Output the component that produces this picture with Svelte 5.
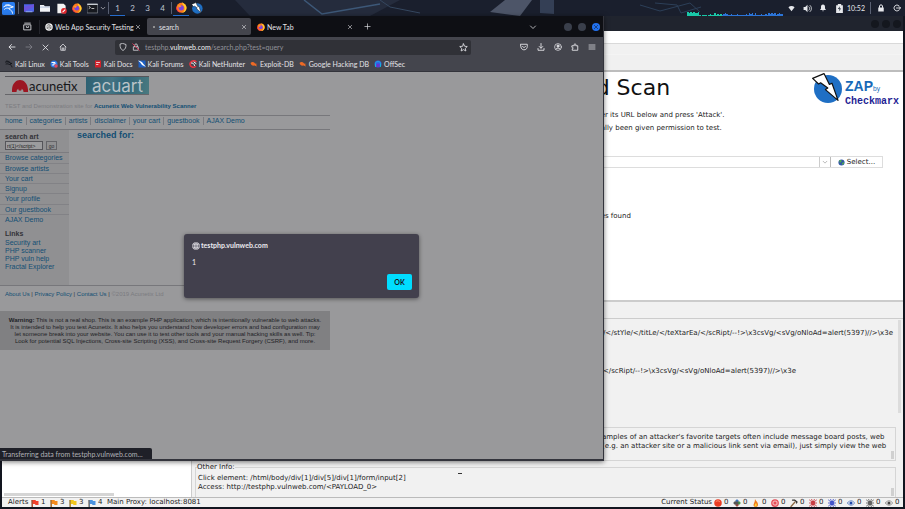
<script>
  const workspaces = [1, 2, 3, 4];
  const bookmarks = [
    { name: 'Kali Linux', icon: 'dragon' },
    { name: 'Kali Tools', icon: 'tools' },
    { name: 'Kali Docs', icon: 'docs' },
    { name: 'Kali Forums', icon: 'forums' },
    { name: 'Kali NetHunter', icon: 'hunter' },
    { name: 'Exploit-DB', icon: 'bug' },
    { name: 'Google Hacking DB', icon: 'bug' },
    { name: 'OffSec', icon: 'offsec' }
  ];
  const siteNav = ['home', 'categories', 'artists', 'disclaimer', 'your cart', 'guestbook', 'AJAX Demo'];
  const sideNav = ['Browse categories', 'Browse artists', 'Your cart', 'Signup', 'Your profile', 'Our guestbook', 'AJAX Demo'];
  const links = ['Security art', 'PHP scanner', 'PHP vuln help', 'Fractal Explorer'];
  const alerts = [
    { color: '#f0402c', count: 1 },
    { color: '#f58a1c', count: 3 },
    { color: '#f2c81e', count: 3 },
    { color: '#4a92e0', count: 4 }
  ];
  const scans = ['ball', 'arrows', 'flame', 'target', 'hammer', 'spider-red', 'spider-blue', 'eye-blue', 'spider-gray', 'eye-gray'];
  const bars = [4, 3, 4, 3, 4, 3, 3, 4, 1, 0, 1, 1, 1, 0, 1, 2, 1, 1, 3, 1, 2, 1, 2, 1, 2, 3, 2, 1, 1, 2, 1, 1, 1, 2, 1, 1, 1, 1, 1, 2, 1, 3, 2, 3, 1, 3, 1, 1, 1, 2, 1, 1, 2, 1, 3, 2, 3, 2, 3, 1, 2, 3, 2, 2];
</script>

{#snippet glyph(name, size = 10)}
  <svg width={size} height={size} viewBox="0 0 16 16" fill="none" stroke="currentColor" stroke-width="1.5" stroke-linecap="round" stroke-linejoin="round" aria-hidden="true">
    {#if name === 'kali'}
      <rect width="16" height="16" rx="2" fill="#2a7df0" stroke="none" />
      <path d="M2 6c3-2 6-2 9-1l3 1-3 1c-2 0-3 1-2 2 2 1 4 2 4 5M3 9c2-2 4-2 6-1M4 4c2-1 4-1 6 0" stroke="#fff" stroke-width="1.1" />
    {:else if name === 'desktop'}
      <rect y="2" width="16" height="12" fill="#4f63e8" stroke="none" />
      <path d="M0 14V6l16-4v4z" fill="#6a53dc" stroke="none" />
      <path d="M3 14h10" stroke="#9db5ff" />
    {:else if name === 'folder'}
      <path d="M0 3h6l2 2h8v9H0z" fill="#f2f4f8" stroke="none" />
      <path d="M0 6h16v1H0z" fill="#8ea4cf" stroke="none" />
    {:else if name === 'editor'}
      <path d="M2 1h9l3 3v11H2z" fill="#f4f4f4" stroke="none" />
      <circle cx="11.5" cy="11.5" r="4.2" fill="#e3272d" stroke="none" />
      <path d="m10 13 3-3" stroke="#fff" />
    {:else if name === 'firefox'}
      <circle cx="8" cy="8.4" r="7.4" fill="#ff7a1a" stroke="none" />
      <path d="M9 0c1 2 5 3 6 7 1 5-3 9-7 9 5-2 5-6 4-9-1-2-3-4-3-7z" fill="#ffcf2f" stroke="none" />
      <path d="M1 6c0 6 4 10 9 9-5 2-10-2-10-7z" fill="#f0265a" stroke="none" />
      <circle cx="7.6" cy="8.4" r="3.8" fill="#7a45e0" stroke="none" />
      <path d="M3 5c2-1 4 0 5 1L5 8z" fill="#ff9a2a" stroke="none" />
    {:else if name === 'terminal'}
      <rect x=".5" y="1.5" width="15" height="13" fill="#171a20" stroke="#8b9098" stroke-width="1" />
      <path d="M1 2h14" stroke="#c7ccd3" />
      <path d="m3 5 2 1.500L3 8M7 8h3" stroke="#fff" stroke-width="1" />
    {:else if name === 'down'}
      <path d="m3 6 5 5 5-5" />
    {:else if name === 'zap'}
      <circle cx="8.500" cy="8.500" r="7" fill="#1f6fc4" stroke="none" />
      <path d="M.8 3.200 6.500.8l2.700 5.400 1.300-.6 3 8.600-6.300-5.400 1.200-.8-3.600-2.600-1 .6z" fill="#fff" stroke="#111" stroke-width=".6" />
    {:else if name === 'wifi'}
      <path d="M1 5c4-4 10-4 14 0l-7 9z" fill="currentColor" stroke="none" />
    {:else if name === 'volume'}
      <path d="M1 5.500h3l4-4v13l-4-4H1z" fill="currentColor" stroke="none" />
      <path d="M10.500 5c2 2 2 4 0 6M12.500 2.500c3.500 3 3.500 8 0 11" />
    {:else if name === 'bell'}
      <path d="M8 1c-3 0-4 2-4 5v3l-2 3h12l-2-3V6c0-3-1-5-4-5zM6 13h4l-2 2z" fill="currentColor" stroke="none" />
    {:else if name === 'battery'}
      <path d="M5 0h6v2h3v14H2V2h3z" fill="currentColor" stroke="none" />
      <path d="M9 4 5 9h3l-1 4 4-5H8z" fill="#1d2433" stroke="none" />
    {:else if name === 'lock'}
      <rect x="2.500" y="7" width="11" height="8" fill="currentColor" stroke="none" />
      <path d="M5 7V4c0-3 6-3 6 0v3" stroke-width="2" />
    {:else if name === 'logout'}
      <path d="M12 3.500A6 6 0 1 0 12 12.500M7 8h8M12.500 5.500 15 8l-2.500 2.500" stroke-width="1.800" />
    {:else if name === 'recent'}
      <path d="M3 2h10M2 5h12v9H2zM6 8v1.500h4V8" />
    {:else if name === 'globe'}
      <circle cx="8" cy="8" r="7.5" fill="#eceaf0" stroke="none" />
      <path d="M1 8h14M8 1v14M4.500 2.500c-2 4-2 7 0 11M11.500 2.500c2 4 2 7 0 11" stroke="#42404d" stroke-width="1.200" />
    {:else if name === 'openai'}
      <circle cx="8" cy="8" r="7.5" fill="#f5f5f5" stroke="none" />
      <path d="M8 3.500 12 5.700v4.600L8 12.500 4 10.300V5.700zM8 3.500v4.500l4 2.300M8 8l-4 2.300" stroke="#333" stroke-width="1" />
    {:else if name === 'close'}
      <path d="m3.500 3.500 9 9M12.500 3.500l-9 9" />
    {:else if name === 'plus'}
      <path d="M8 2v12M2 8h12" />
    {:else if name === 'back'}
      <path d="M14 8H2.500M7 3 2 8l5 5" stroke-width="1.800" />
    {:else if name === 'forward'}
      <path d="M2 8h11.500M9 3l5 5-5 5" />
    {:else if name === 'home'}
      <path d="M2 8 8 2l6 6M3.500 7v7.500h9V7M6.500 14v-4h3v4" />
    {:else if name === 'shield'}
      <path d="m8 1 6 2c0 6-1 9-6 12C3 12 2 9 2 3z" />
    {:else if name === 'insecure'}
      <path d="M3.500 7.500h9v7h-9zM5.500 7V4c0-3 5-3 5 0v3" />
      <path d="M1.500 1.500 14.500 14.500" stroke="#e5395a" stroke-width="1.800" />
    {:else if name === 'star'}
      <path d="m8 1.500 2 4.300 4.700.5-3.500 3.200 1 4.700L8 11.800l-4.200 2.400 1-4.700L1.300 6.300 6 5.800z" />
    {:else if name === 'pocket'}
      <path d="M1.500 2.500h13V7c0 9-13 9-13 0zM5 6.500l3 3 3-3" stroke-width="1.800" />
    {:else if name === 'download'}
      <path d="M8 1v9M4.500 7 8 10.500 11.500 7M2 11v3.500h12V11" stroke-width="1.800" />
    {:else if name === 'account'}
      <circle cx="8" cy="8" r="6.8" />
      <circle cx="8" cy="6" r="2.200" fill="currentColor" />
      <path d="M4 12c1-3 7-3 8 0" stroke-width="2" />
    {:else if name === 'extension'}
      <path d="M2.500 5.500h4V3c0-2 3-2 3 0v2.500h4v9h-11v-3c3 0 3-3 0-3z" stroke-width="1.800" />
    {:else if name === 'menu'}
      <path d="M2 4h12M2 8h12M2 12h12" />
    {:else if name === 'dragon'}
      <path d="M1 4c4-1 7 0 9 2l4 1-4 1c1 2 3 3 4 6M2 8c3-1 5 0 7 1M3 2c3 0 5 1 7 3" stroke="#111318" stroke-width="1.800" />
    {:else if name === 'tools'}
      <circle cx="8" cy="8" r="7" fill="#2f7be8" stroke="none" />
      <path d="M4 5h6v3H6v3" stroke="#fff" stroke-width="2" />
      <circle cx="12" cy="12" r="3.500" fill="#e6495c" stroke="none" />
    {:else if name === 'docs'}
      <rect x="2" y="1" width="12" height="14" fill="#d4202a" stroke="none" />
      <path d="M5 5h6M5 9h3" stroke="#fff" />
    {:else if name === 'forums'}
      <path d="M1 1h14v14H1z" fill="#1c5fc4" stroke="none" />
      <path d="M0 1c6 1 9 3 10 6l6 7-8-4C6 6 3 4 0 1z" fill="#fff" stroke="none" />
    {:else if name === 'hunter'}
      <path d="M14 3C8-1 1 4 2 9s7 7 11 4" stroke="#e8343f" stroke-width="3" />
      <path d="M5 6c3 0 5 1 6 5M10 4l4 3" stroke="#fff" stroke-width="2" />
    {:else if name === 'bug'}
      <path d="M1 6c3-3 7-2 9 1l5 1-3 1 2 4-5-2c-4 1-7-1-8-5z" fill="#ee6a25" stroke="none" />
    {:else if name === 'offsec'}
      <circle cx="8" cy="8" r="7" fill="#3559e8" stroke="none" />
      <path d="M3 13V7c0-5 10-5 10 0v6" stroke="#16b3d9" stroke-width="2" />
      <rect x="5" y="8" width="6" height="6" fill="#6a35c9" stroke="none" />
    {:else if name === 'earth'}
      <circle cx="8" cy="8" r="7" fill="#3256a8" stroke="none" />
      <path d="M3 3c4-2 6 0 5 3l-4 3zM9 9l5-2c0 4-2 6-5 6z" fill="#4fae4a" stroke="none" />
    {:else if name === 'ball'}
      <circle cx="8" cy="8" r="7.500" fill="#ea3b22" stroke="none" />
      <path d="M4 5c2-2 5-2 7 0" stroke="#ff9a7c" stroke-width="2" />
    {:else if name === 'arrows'}
      <path d="M8 2v12M2 8h12" stroke="#555" stroke-width="5" stroke-linecap="butt" />
      <path d="m8 0 4 5H4z" fill="#3a74c2" stroke="none" />
      <path d="m16 8-5 4V4z" fill="#3fa045" stroke="none" />
      <path d="m8 16-4-5h8z" fill="#a04a3d" stroke="none" />
      <path d="m0 8 5-4v8z" fill="#555" stroke="none" />
    {:else if name === 'flame'}
      <path d="M6 0c1 4 6 6 6 11 0 7-9 6-9 1 0-3 3-5 3-12z" fill="#f07a18" stroke="none" />
      <path d="M8 8c3 4 1 7-1 7s-3-3 1-7z" fill="#ffd23a" stroke="none" />
    {:else if name === 'target'}
      <circle cx="8" cy="8" r="6.500" fill="#f7b5b8" stroke="#e5505a" stroke-width="2.500" />
      <circle cx="8" cy="8" r="3" fill="#e5505a" stroke="none" />
    {:else if name === 'hammer'}
      <path d="m2 15 8-9" stroke="#8b6a45" stroke-width="2.500" />
      <path d="m5 2 4 0 5 4-1 2" stroke="#333" stroke-width="2.500" />
    {:else if name.startsWith('spider')}
      <g stroke={name === 'spider-red' ? '#c32f35' : name === 'spider-blue' ? '#3548c8' : '#555'} stroke-width="1.600">
        <path d="M1 2l5 4M15 2l-5 4M0 8h16M1 14l5-4M15 14l-5-4M5 0l2 5M11 0 9 5M5 16l2-5M11 16l-2-5" />
        <circle cx="8" cy="8" r="2.500" stroke-width="3" />
      </g>
    {:else if name.startsWith('eye')}
      <path d="M1 8c3-6 11-6 14 0-3 6-11 6-14 0z" fill="#fff" stroke={name === 'eye-blue' ? '#4a6fb5' : '#777'} />
      <circle cx="8" cy="8" r="3.200" fill={name === 'eye-blue' ? '#1f48a8' : '#444'} stroke="none" />
    {/if}
  </svg>
{/snippet}

<div class="desktop">
  <header class="panel">
    <svg class="wallpaper" viewBox="0 0 905 16" preserveAspectRatio="none" aria-hidden="true">
      <path d="M235 0h165l-30 16h-120z" fill="#252c3d" />
      <path d="m304 0 18 14 58-10" stroke="#3d5878" stroke-width="1.500" fill="none" />
      <path d="m380 0 10 7 30 6" stroke="#35475f" fill="none" />
      <path d="m505 0-15 12 30 4 12-16z" fill="#4d5568" />
      <path d="M540 0v13l14 1V0" fill="#343f55" />
      <path d="m640 5 20 6 30-8 10 9M655 3l22 2 4 8 20-6" stroke="#2c3f58" fill="none" />
    </svg>
    <button class="pb start" aria-label="Applications">{@render glyph('kali', 13)}</button>
    <i class="sep"></i>
    <button class="pb" aria-label="Show desktop">{@render glyph('desktop', 10)}</button>
    <button class="pb" aria-label="Files">{@render glyph('folder', 10)}</button>
    <button class="pb" aria-label="Text editor">{@render glyph('editor', 11)}</button>
    <button class="pb" aria-label="Firefox">{@render glyph('firefox', 10)}</button>
    <button class="pb tight" aria-label="Terminal">{@render glyph('terminal', 11)}</button>
    <button class="pb tiny" aria-label="More terminals">{@render glyph('down', 6)}</button>
    <i class="sep"></i>
    {#each workspaces as n}
      <button class="ws" class:active={n === 1}>{n}</button>
    {/each}
    <i class="sep"></i>
    <button class="pb active" aria-label="Firefox window">{@render glyph('firefox', 11)}</button>
    <button class="pb" aria-label="ZAP window">{@render glyph('zap', 12)}</button>
    <span class="grow"></span>
    <div class="graph" aria-hidden="true">
      {#each bars as h, i}
        <i class:cool={i > 22} style="height:{h}px"></i>
      {/each}
    </div>
    <div class="tray">
      <button class="pb" aria-label="Network">{@render glyph('wifi', 7)}</button>
      <button class="pb" aria-label="Volume">{@render glyph('volume', 9)}</button>
      <button class="pb" aria-label="Notifications">{@render glyph('bell', 8)}</button>
      <button class="pb" aria-label="Power">{@render glyph('battery', 9)}</button>
      <time>10:52</time>
      <i class="sep"></i>
      <button class="pb" aria-label="Lock">{@render glyph('lock', 8)}</button>
      <button class="pb" aria-label="Log out">{@render glyph('logout', 8)}</button>
    </div>
  </header>

  <section class="zap">
    <div class="ztitle"><i></i><i></i><i></i></div>
    <div class="zmenu"></div>
    <div class="ztools"></div>
    <div class="quick">
      <div class="qhead">
        <h1>d Scan</h1>
        <div class="zlogo">
          {@render glyph('zap', 32)}
          <div class="zname">
            <div class="ztop"><b>ZAP</b><small>by</small></div>
            <strong>Checkmarx</strong>
          </div>
        </div>
      </div>
      <p>er its URL below and press 'Attack'.</p>
      <p>ally been given permission to test.</p>
      <div class="attack">
        <input type="text" aria-label="URL to attack" />
        <button class="drop" aria-label="History">{@render glyph('down', 6)}</button>
        <button class="select">{@render glyph('earth', 7)}Select...</button>
      </div>
      <p class="found">es found</p>
    </div>
    <div class="zstrip"></div>
    <div class="zbottom">
      <div class="tree"><i></i></div>
      <div class="detail">
        <div class="request">
          <p>/&lt;/stYle/&lt;/titLe/&lt;/teXtarEa/&lt;/scRipt/--!&gt;\x3csVg/&lt;sVg/oNloAd=alert(5397)//&gt;\x3e</p>
          <p>&lt;/scRipt/--!&gt;\x3csVg/&lt;sVg/oNloAd=alert(5397)//&gt;\x3e</p>
          <i class="bar"></i>
        </div>
        <div class="box desc">
          <p>amples of an attacker's favorite targets often include message board posts, web</p>
          <p>(e.g. an attacker site or a malicious link sent via email), just simply view the web</p>
          <i class="thumb"></i>
        </div>
        <div class="box info">
          <h2>Other Info:</h2>
          <p>Click element: /html/body/div[1]/div[5]/div[1]/form/input[2]</p>
          <p>Access: http://testphp.vulnweb.com/&lt;PAYLOAD_0&gt;</p>
          <i class="caret"></i>
          <i class="thumb"></i>
        </div>
      </div>
    </div>
    <footer class="zstatus">
      <span class="al">Alerts</span>
      {#each alerts as a}
        <span class="flag">
          <svg width="8" height="8" viewBox="0 0 16 16" aria-hidden="true"><path d="M1 2h8l1 2h5v8H9l-1-2H4v6H2z" fill={a.color} /><path d="M2 2v14" stroke="#7a5a3a" stroke-width="2" /></svg>{a.count}
        </span>
      {/each}
      <span>Main Proxy: localhost:8081</span>
      <span class="grow"></span>
      <span class="cs">Current Status</span>
      {#each scans as s}
        <span class="scan">{@render glyph(s, 8)}0</span>
      {/each}
    </footer>
  </section>

  <section class="browser">
    <div class="tabs">
      <button class="recent" aria-label="Recent browsing">{@render glyph('recent', 9)}</button>
      <div class="tab">{@render glyph('openai', 8)}<span>Web App Security Testing</span><button aria-label="Close tab">{@render glyph('close', 6)}</button></div>
      <div class="tab current"><i class="dot"></i><span>search</span><button aria-label="Close tab">{@render glyph('close', 6)}</button></div>
      <div class="tab">{@render glyph('firefox', 8)}<span>New Tab</span><button aria-label="Close tab">{@render glyph('close', 6)}</button></div>
      <button class="new" aria-label="New tab">{@render glyph('plus', 7)}</button>
      <span class="grow"></span>
      <button class="list" aria-label="List tabs">{@render glyph('down', 8)}</button>
      <button class="win" aria-label="Minimize"></button>
      <button class="win" aria-label="Maximize"></button>
      <button class="win shut" aria-label="Close">{@render glyph('close', 6)}</button>
    </div>
    <div class="toolbar">
      <button aria-label="Back">{@render glyph('back', 8)}</button>
      <button class="faint" aria-label="Forward">{@render glyph('forward', 8)}</button>
      <button aria-label="Stop">{@render glyph('close', 9)}</button>
      <button aria-label="Home">{@render glyph('home', 8)}</button>
      <div class="url">
        {@render glyph('shield', 8)}
        {@render glyph('insecure', 8)}
        <span class="addr">testphp.<b>vulnweb.com</b>/search.php?test=query</span>
        {@render glyph('star', 9)}
      </div>
      <button aria-label="Pocket">{@render glyph('pocket', 8)}</button>
      <button aria-label="Downloads">{@render glyph('download', 8)}</button>
      <button aria-label="Account">{@render glyph('account', 8)}</button>
      <button aria-label="Extensions">{@render glyph('extension', 8)}</button>
      <button aria-label="Menu">{@render glyph('menu', 8)}</button>
    </div>
    <nav class="marks">
      {#each bookmarks as b}
        <a href="#{b.icon}">{@render glyph(b.icon, 8)}{b.name}</a>
      {/each}
    </nav>
    <main class="page">
      <div class="site">
        <div class="brand">
          <div class="acunetix">
            <svg width="16" height="12" viewBox="0 0 16 12" aria-hidden="true"><path d="M0 12C-1-4 17-4 16 12h-4.500a3.500 3.500 0 1 0-7 0z" fill="#9c1622" /><circle cx="8" cy="9" r="1.800" fill="#9c1622" /></svg>
            <span>acunetix</span>
          </div>
          <div class="acuart">acuart</div>
        </div>
        <h6>TEST and Demonstration site for <a href="#scanner">Acunetix Web Vulnerability Scanner</a></h6>
        <nav class="sitenav">
          {#each siteNav as item}<a href="#{item}">{item}</a>{/each}
        </nav>
        <div class="cols">
          <aside>
            <label for="art">search art</label>
            <div class="searchrow"><input id="art" type="text" value="rt(1)</script>" /><button>go</button></div>
            <ul class="side">
              {#each sideNav as item}<li><a href="#{item}">{item}</a></li>{/each}
            </ul>
            <h3>Links</h3>
            <ul class="links">
              {#each links as item}<li><a href="#{item}">{item}</a></li>{/each}
            </ul>
          </aside>
          <h2>searched for:</h2>
        </div>
        <div class="foot"><a href="#about">About Us</a> | <a href="#privacy">Privacy Policy</a> | <a href="#contact">Contact Us</a> | <span>©2019 Acunetix Ltd</span></div>
        <div class="warn"><b>Warning:</b> This is not a real shop. This is an example PHP application, which is intentionally vulnerable to web attacks.<br />It is intended to help you test Acunetix. It also helps you understand how developer errors and bad configuration may<br />let someone break into your website. You can use it to test other tools and your manual hacking skills as well. Tip:<br />Look for potential SQL Injections, Cross-site Scripting (XSS), and Cross-site Request Forgery (CSRF), and more.</div>
      </div>
      <div class="dialog" role="alertdialog" aria-labelledby="origin">
        <div class="origin" id="origin">{@render glyph('globe', 8)}testphp.vulnweb.com</div>
        <p>1</p>
        <button>OK</button>
      </div>
      <div class="transfer">Transferring data from testphp.vulnweb.com...</div>
    </main>
  </section>
</div>

<style>
  * { box-sizing: border-box; }
  .desktop { position: relative; height: 100vh; overflow: hidden; background: #12151f; font: 7px/8px Lato, "Noto Sans", sans-serif; }
  svg { display: block; flex: none; }
  button { border: 0; padding: 0; margin: 0; background: none; color: inherit; font: inherit; display: flex; align-items: center; justify-content: center; flex: none; }
  h1, h2, h3, h6, p, ul { margin: 0; padding: 0; list-style: none; }
  a { color: inherit; text-decoration: none; }
  .grow { flex: 1; }

  .panel { position: relative; height: 16px; display: flex; align-items: stretch; background: #1a1f2d; color: #e6e8ec; font-size: 8px; }
  .wallpaper { position: absolute; inset: 0; width: 100%; height: 100%; }
  .panel > :not(.wallpaper) { position: relative; }
  .pb { width: 16px; height: 16px; }
  .pb.start { width: 17px; }
  .pb.tight { width: 14px; }
  .pb.tiny { width: 8px; }
  .sep { width: 1px; height: 12px; margin: 2px 1px; background: #596072; align-self: center; flex: none; }
  .sep + .pb:not(.active) { margin-left: 1px; }
  .ws { width: 15px; border-bottom: 1px solid transparent; color: #bfc5d0; }
  .ws.active, .pb.active { border-bottom: 1px solid #2d7ff0; }
  .graph { display: flex; align-items: flex-end; width: 96px; }
  .graph i { flex: 1; background: #19c8a8; }
  .graph i.cool { background: #2b74d8; }
  .tray { display: flex; align-items: center; }
  .tray time { font-size: 7px; padding-right: 4px; }

  .zap { position: absolute; inset: 16px 2px 2px; display: flex; flex-direction: column; background: #f1f1f1; color: #222; font: 7px/9px "DejaVu Sans", sans-serif; white-space: nowrap; }
  .ztitle { height: 15px; background: #20242e; display: flex; justify-content: flex-end; align-items: center; gap: 3px; padding-right: 2px; }
  .ztitle i { width: 8px; height: 8px; border-radius: 50%; background: #14171e; }
  .zmenu { height: 13px; background: #fff; border-bottom: 1px solid #d9d9d9; }
  .ztools { height: 28px; border-bottom: 2px solid #bdbdbd; background: linear-gradient(#f1f1f1 10px, #f8f8f8 10px, #f0f0f0 11px); }
  .quick { flex: 228 1 0; background: #fff; padding: 0 20px 0 66%; }
  .qhead { display: flex; justify-content: space-between; height: 37px; margin: 0 -16px 0 -1px; color: #111; }
  h1 { font-size: 22px; line-height: 32px; font-weight: 400; }
  .zlogo { display: flex; gap: 2px; }
  .zname { padding-top: 6px; color: #1f1f94; }
  .ztop { display: flex; align-items: baseline; color: #1769b8; font: 8px/16px "Liberation Sans", sans-serif; }
  .ztop b { font-size: 14px; }
  .zname strong { display: block; font: bold 10px/10px "Liberation Mono", monospace; }
  .quick p { line-height: 13px; margin-left: 4px; }
  .attack { display: flex; height: 12px; margin-top: 21px; border: 1px solid #ddd; }
  .attack input { flex: 1; min-width: 0; border: 0; background: #fff; padding: 0 4px; font: inherit; }
  .drop { width: 12px; border-left: 1px solid #ccc; border-right: 1px solid #bbb; color: #888; }
  .select { width: 51px; gap: 2px; }
  .quick .found { margin-top: 42px; }
  .zstrip { height: 19px; border-top: 2px solid #ccc; border-bottom: 1px solid #ccc; }
  .zbottom { flex: 178 1 0; display: flex; }
  .tree { width: 190px; background: #fff; border-right: 1px solid #ccc; display: flex; align-items: flex-end; padding: 0 2px 1px; }
  .tree i { width: 110px; height: 3px; background: #d5d5d5; }
  .detail { flex: 1; min-width: 0; display: flex; flex-direction: column; padding-left: 3px; }
  .request { flex: 108 1 0; position: relative; padding: 10px 0 0 408px; }
  .request p { margin-bottom: 29px; }
  .request .bar { position: absolute; right: 2px; top: 1px; width: 3px; height: 93px; background: #dcdcdc; }
  .box { position: relative; border: 1px solid #d5d5d5; margin-right: 7px; }
  .thumb { position: absolute; right: 1px; bottom: 1px; width: 3px; height: 8px; background: #d0d0d0; }
  .desc { height: 34px; margin-bottom: 6px; padding: 5px 0 0 406px; }
  .info { height: 30px; border-bottom: 0; padding: 6px 0 0 2px; }
  .info h2 { position: absolute; top: -5px; left: 1px; font-size: 7px; line-height: 9px; font-weight: 400; background: #f1f1f1; }
  .caret { position: absolute; left: 262px; top: 5px; width: 4px; height: 1px; background: #333; }
  .zstatus { height: 10px; border-top: 1px solid #bbb; display: flex; align-items: center; padding: 0 4px 0 6px; }
  .al { width: 23px; }
  .flag, .scan { display: flex; align-items: center; gap: 2px; width: 19px; }
  .cs { margin-right: 2px; }
  .scan:last-child { width: 14px; }

  .browser { position: absolute; left: 0; top: 16px; bottom: 48px; width: 66.75%; display: flex; flex-direction: column; background: #44454d; color: #e4e4e8; border-right: 1px solid #33343c; border-bottom: 2px solid #33343c; box-shadow: 0 1px 5px #0008; white-space: nowrap; }
  .tabs { height: 21px; background: #0e0f14; display: flex; align-items: center; }
  .recent { width: 40px; padding-left: 16px; border-right: 1px solid #24252c; height: 14px; }
  .tab { width: 104px; height: 17px; margin: 0 1px; padding: 0 4px; display: flex; align-items: center; gap: 2px; border-radius: 2px; }
  .tab span { flex: 1; min-width: 0; line-height: 10px; }
  .tab.current { background: #44454d; }
  .dot { width: 2px; height: 2px; margin: 0 2px; border-radius: 50%; background: #aaa; }
  .new { width: 18px; }
  .list { width: 16px; margin-right: 20px; }
  .win { width: 8px; height: 8px; border-radius: 50%; background: #3a3f4b; margin: 0 3px; }
  .win.shut { background: #2272f0; color: #0e1a30; }
  .toolbar { height: 20px; display: flex; align-items: center; padding: 0 3px; }
  .toolbar button { width: 17px; height: 16px; }
  .toolbar .faint { color: #85868d; }
  .url { flex: 1; height: 15px; margin: 0 44px; padding: 0 3px 0 4px; display: flex; align-items: center; gap: 5px; background: #303137; border-radius: 2px; }
  .addr { flex: 1; color: #92939a; }
  .addr b { font-weight: 400; color: #f0f0f3; }
  .marks { height: 15px; display: flex; align-items: center; gap: 5px; padding: 0 5px; border-bottom: 1px solid #33343b; }
  .marks a { display: flex; align-items: center; gap: 2px; }

  .page { flex: 1; position: relative; background: #99999b; color: #333338; font: 7px/8px "Liberation Sans", Arial, sans-serif; overflow: hidden; }
  .page a { color: #134f74; }
  .site { width: 330px; padding-top: 4px; }
  .brand { display: flex; width: 144px; height: 19px; margin: 0 0 3px 5px; border-top: 1px solid #55555a; border-bottom: 1px solid #66666a; }
  .acunetix { width: 81px; display: flex; align-items: center; gap: 1px; padding-left: 7px; color: #17171a; font: 13px/16px Lato, sans-serif; }
  .acuart { flex: 1; display: flex; align-items: center; justify-content: center; background: linear-gradient(100deg, #2d6071, #437383 40%, #2f6579 60%, #4a7a80); color: #b9c3c8; font: 17px/16px Inter, sans-serif; }
  h6 { font-size: 6px; line-height: 16px; height: 18px; font-weight: 400; color: #7b7b80; padding-left: 5px; border-bottom: 1px solid #77777b; }
  h6 a { font-weight: 700; }
  .sitenav { height: 14px; display: flex; align-items: center; padding: 0 0 4px 5px; border-bottom: 1px solid #77777b; }
  .sitenav a + a { border-left: 1px solid #7b7b80; margin-left: 3px; padding-left: 3px; }
  .cols { display: flex; height: 155px; }
  aside { width: 69px; background: #909092; padding-top: 3px; }
  aside label, aside h3 { display: block; padding-left: 5px; font-size: 7px; line-height: 8px; font-weight: 700; }
  .searchrow { display: flex; gap: 3px; padding: 0 5px; height: 12px; border-bottom: 1px solid #7c7c80; }
  .searchrow input { width: 38px; height: 9px; border: 1px solid #55555a; background: #9c9c9e; padding: 0 1px; font: 5px/7px "Liberation Sans", sans-serif; color: #222; }
  .searchrow button { width: 11px; height: 9px; border: 1px solid #66666a; font-size: 5px; }
  .side li { height: 10px; line-height: 9px; padding-left: 5px; border-bottom: 1px solid #828286; }
  .side li:nth-child(4n + 1) { height: 11px; }
  .side li:last-child { border: 0; }
  aside h3 { margin-top: 5px; margin-bottom: 1px; }
  .links li { padding-left: 5px; }
  .cols h2 { margin-left: 8px; font-size: 9px; line-height: 10px; color: #134f74; }
  .foot { height: 18px; line-height: 16px; font-size: 6px; padding-left: 5px; border-top: 1px solid #77777b; margin-bottom: 8px; }
  .foot span { color: #7b7b80; }
  .warn { background: #808082; color: #222226; font-size: 6px; line-height: 7px; text-align: center; padding: 6px 0 5px; white-space: nowrap; }

  .dialog { position: absolute; left: 184px; top: 162px; width: 235px; height: 64px; padding: 7px 7px 8px 8px; border-radius: 3px; background: #42404d; box-shadow: 0 1px 4px #0007; color: #ecebf0; font: 7px/9px Lato, "Noto Sans", sans-serif; display: flex; flex-direction: column; }
  .origin { display: flex; align-items: center; gap: 1px; font-weight: 700; }
  .dialog p { margin-top: 8px; }
  .dialog button { width: 25px; height: 16px; margin-top: auto; align-self: flex-end; border-radius: 2px; background: #00ddff; color: #15141a; font-weight: 700; }
  .transfer { position: absolute; left: 0; bottom: -1px; height: 12px; padding: 0 9px 0 2px; border-radius: 0 2px 0 0; background: #1f2028; color: #b0b1b6; font: 7px/12px Lato, "Noto Sans", sans-serif; }
</style>
